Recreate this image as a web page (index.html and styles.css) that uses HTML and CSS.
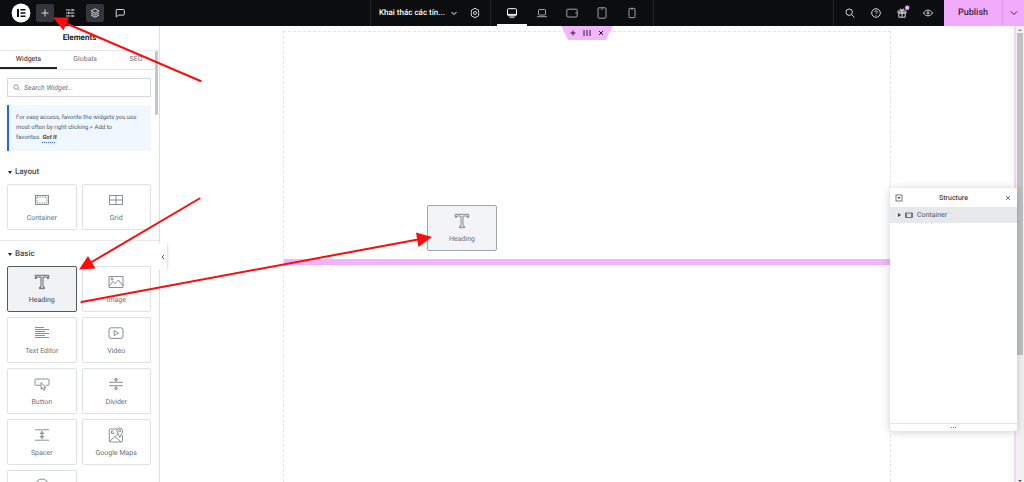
FILE: index.html
```html
<!DOCTYPE html>
<html lang="en">
<head>
<meta charset="utf-8">
<title>Elements</title>
<link rel="stylesheet" href="styles.css">
</head>
<body>
<header class="topbar">
  <div class="tools">
    <button class="logo" aria-label="Menu"><svg viewBox="0 0 20 20" width="20" height="20"><circle cx="10" cy="10" r="9.400" fill="#fff"/><path d="M6 6h2v8H6zM9.500 6h5v1.600h-5zM9.500 9.200h5v1.600h-5zM9.500 12.400h5v1.600h-5z" fill="#0c0d0e"/></svg></button>
    <button class="tool active" aria-label="Add element"><svg class="ico" viewBox="0 0 12 12"><path d="M6 2.500v7M2.500 6h7"/></svg></button>
    <button class="tool" aria-label="Site settings"><svg class="ico" viewBox="0 0 12 12"><path d="M2 3h4.500M8 3h2.500M2 6h1.500M5 6h5.500M2 9h4.500M8 9h2.500M8 1.800v2.400M4.500 4.800v2.400M8 7.800v2.400"/></svg></button>
    <button class="tool active" aria-label="Structure"><svg class="ico" viewBox="0 0 12 12"><path d="M6 1.800l4 2.200-4 2.200L2 4zM2 6l4 2.200L10 6M2 8l4 2.200L10 8"/></svg></button>
    <button class="tool" aria-label="Notes"><svg class="ico" viewBox="0 0 12 12"><path d="M3 2.500h6.500a.8.800 0 0 1 .8.800v4a.8.800 0 0 1-.8.800H4.500L2.200 10V3.300a.8.800 0 0 1 .8-.8z"/></svg></button>
  </div>
  <div class="center">
    <div class="document">
      <button class="docname">Khai thác các tín...<svg class="chev" viewBox="0 0 8 8"><path d="M1.500 3L4 5.500 6.500 3"/></svg></button>
      <button class="tool" aria-label="Page settings"><svg class="ico" viewBox="0 0 12 12"><path d="M5 1.500h2l.5 1.100 1.300-.2 1 1.600-.5 1.200.9.800-.9.900.5 1.200-1 1.500-1.300-.2L7 10.500H5l-.5-1.100-1.300.2-1-1.500.5-1.200-.9-.9.900-.8-.5-1.200 1-1.600 1.300.2z"/><circle cx="6" cy="6" r="1.500"/></svg></button>
    </div>
    <div class="devices">
      <button class="device selected" aria-label="Desktop"><svg class="ico" viewBox="0 0 12 12"><rect x="1.500" y="1.700" width="9" height="7" rx="1"/><path d="M1.500 7.400h9M3.500 10.200h5"/></svg></button>
      <button class="device" aria-label="Laptop"><svg class="ico" viewBox="0 0 12 12"><rect x="2.500" y="2.500" width="7" height="5.500" rx=".7"/><path d="M1 9.700h10"/></svg></button>
      <button class="device" aria-label="Tablet landscape"><svg class="ico" viewBox="0 0 12 12"><rect x=".8" y="2.200" width="10.400" height="7.800" rx="1"/><path d="M10 5.200v1.600"/></svg></button>
      <button class="device" aria-label="Tablet portrait"><svg class="ico" viewBox="0 0 12 12"><rect x="2" y=".8" width="8" height="10.400" rx="1"/><path d="M5.200 2.200h1.600"/></svg></button>
      <button class="device" aria-label="Mobile"><svg class="ico" viewBox="0 0 12 12"><rect x="3" y="1.300" width="6" height="9.400" rx="1"/><path d="M5.400 2.700h1.200"/></svg></button>
    </div>
  </div>
  <div class="actions">
    <div class="utilities">
      <button class="tool" aria-label="Finder"><svg class="ico" viewBox="0 0 12 12"><circle cx="5.200" cy="5.200" r="3.200"/><path d="M7.500 7.500L10.400 10.400"/></svg></button>
      <button class="tool" aria-label="Help"><svg class="ico" viewBox="0 0 12 12"><circle cx="6" cy="6" r="4.300"/><path d="M4.800 5a1.200 1.200 0 1 1 1.800 1c-.5.300-.6.500-.6.900M6 8v.7"/></svg></button>
      <button class="tool" aria-label="What's new"><svg class="ico" viewBox="0 0 12 12"><path d="M2 4h8v2H2zM2.800 6h6.400v4.200H2.800zM6 4v6M6 4C4 4 3.500 2 4.600 1.900 5.500 1.900 6 4 6 4s.5-2.100 1.400-2.100C8.500 2 8 4 6 4"/><circle class="dot" cx="11.200" cy=".8" r="2.200"/></svg></button>
      <button class="tool" aria-label="Preview"><svg class="ico" viewBox="0 0 12 12"><path d="M1.500 6C3.700 2.200 8.300 2.200 10.500 6 8.300 9.800 3.700 9.800 1.500 6z"/><circle cx="6" cy="6" r="1.100"/></svg></button>
    </div>
    <button class="publish">Publish</button>
    <button class="options" aria-label="Save options"><svg class="chev" viewBox="0 0 8 8"><path d="M1 2.500L4 5.500 7 2.500"/></svg></button>
  </div>
</header>

<main class="workspace">
  <aside class="sidebar">
    <h1 class="title">Elements</h1>
    <nav class="tabs">
      <button class="tab current">Widgets</button>
      <button class="tab">Globals</button>
      <button class="tab">SEO</button>
    </nav>
    <label class="search">
      <svg class="search-ico" viewBox="0 0 8 8"><circle cx="3.500" cy="3.500" r="2.500"/><path d="M5.300 5.300L7.300 7.300"/></svg>
      <input type="text" placeholder="Search Widget..." aria-label="Search Widget">
    </label>
    <p class="notice">For easy access, favorite the widgets you use most often by right clicking &gt; Add to <span class="keep">favorites. <a href="#">Got It</a></span></p>

    <section class="group">
      <h2 class="group-title">Layout</h2>
      <div class="cards">
        <button class="card"><svg class="wi" viewBox="0 0 16 16"><rect x="1.500" y="3.500" width="13" height="9"/><rect x="3" y="5" width="10" height="6" stroke-dasharray="1.500 1"/></svg>Container</button>
        <button class="card"><svg class="wi" viewBox="0 0 16 16"><path d="M1.500 3.500h13v9h-13zM1.500 8h13M8 3.500v9"/></svg>Grid</button>
      </div>
    </section>
    <section class="group">
      <h2 class="group-title">Basic</h2>
      <div class="cards">
        <button class="card picked"><svg class="wi" viewBox="0 0 16 16"><path d="M1.300 1.300h13.400v3.200h-1.200V3H9v10.300h1.500v1.400h-5v-1.400H7V3H2.500v1.500H1.300z"/></svg>Heading</button>
        <button class="card"><svg class="wi" viewBox="0 0 16 16"><path d="M1 2.500h14v11H1zM1 12l4-4.500 2 2.300L10.500 6l4.500 6"/><circle cx="4" cy="5" r="1.100"/></svg>Image</button>
        <button class="card"><svg class="wi" viewBox="0 0 16 16"><path d="M1 2.500h9M1 4.500h14M1 6.500h10M1 8.500h14M1 10.500h10M1 12.500h14"/></svg>Text Editor</button>
        <button class="card"><svg class="wi" viewBox="0 0 16 16"><rect x="1" y="2.800" width="14" height="10.600" rx="2.200"/><path d="M6.200 5.600v5l4.300-2.500z"/></svg>Video</button>
        <button class="card"><svg class="wi" viewBox="0 0 16 16"><path d="M6.500 9.300H2A1 1 0 0 1 1 8.300V4a1 1 0 0 1 1-1h12a1 1 0 0 1 1 1v4.300a1 1 0 0 1-1 1h-2"/><path d="M7 6.500v6.700l1.600-1.300 1 2.300 1.300-.6-1-2.200H12z"/></svg>Button</button>
        <button class="card"><svg class="wi" viewBox="0 0 16 16"><path d="M1 6.300h14M1 9.700h14M8 4.300V6M8 10v1.700M6.500 4.100L8 1.900l1.500 2.200zM6.500 11.900L8 14.100l1.500-2.200z"/></svg>Divider</button>
        <button class="card"><svg class="wi" viewBox="0 0 16 16"><path d="M1 2.800h14M1 13.200h14M8 5.500v5M6.200 6.600L8 4.300l1.800 2.300zM6.200 9.400L8 11.700l1.800-2.300z"/></svg>Spacer</button>
        <button class="card"><svg class="wi" viewBox="0 0 16 16"><path d="M9 2H2.500A1.200 1.200 0 0 0 1.300 3.200v10.600A1.200 1.200 0 0 0 2.500 15h10.800a1.200 1.200 0 0 0 1.200-1.200V8M1.500 14.500L10 6.800M7 9.700l6 5M5.500 4H3.500v2.500h2V5.300M11.800 10.500L9.300 5.300a2.900 2.900 0 1 1 5 0z"/><circle cx="11.800" cy="3.700" r="1.100"/></svg>Google Maps</button>
        <button class="card icon-only" aria-label="Icon"><svg class="wi" viewBox="0 0 16 16"><circle cx="8" cy="8" r="7"/><path d="M8 4v1.500M6.500 7H8v5M6 12h4"/></svg></button>
      </div>
    </section>
    <span class="thumb"></span>
  </aside>

  <section class="canvas">
    <button class="collapse" aria-label="Hide panel"><svg class="chev" viewBox="0 0 8 8"><path d="M5 2L3 4l2 2"/></svg></button>
    <div class="container">
      <div class="handle">
        <button aria-label="Add"><svg viewBox="0 0 8 8"><path d="M4 1.500v5M1.500 4h5"/></svg></button>
        <button aria-label="Drag"><svg viewBox="0 0 8 8"><path d="M0 2h2M3 2h2M6 2h2M0 4h2M3 4h2M6 4h2M0 6h2M3 6h2M6 6h2"/></svg></button>
        <button aria-label="Delete"><svg viewBox="0 0 8 8"><path d="M2 2l4 4M6 2L2 6"/></svg></button>
      </div>
      <div class="card dragged"><svg class="wi" viewBox="0 0 16 16"><path d="M1.300 1.300h13.400v3.200h-1.200V3H9v10.300h1.500v1.400h-5v-1.400H7V3H2.500v1.500H1.300z"/></svg>Heading</div>
      <div class="dropline"></div>
    </div>
  </section>
  <div class="scrollbar"><i class="up"></i><span class="bar"></span><i class="down"></i></div>

  <aside class="structure">
    <div class="structure-head">
      <button aria-label="Expand all"><svg viewBox="0 0 8 8"><rect x="1" y="1" width="6" height="6"/><path d="M2.300 3h3.400L4 5.200z" fill="#515962" stroke="none"/></svg></button>
      <h2>Structure</h2>
      <button aria-label="Close"><svg viewBox="0 0 8 8"><path d="M2 2l4 4M6 2L2 6"/></svg></button>
    </div>
    <button class="node"><i class="caret"></i><svg viewBox="0 0 8 8"><path d="M.5 2h7v4.500h-7zM1.600 2v4.500M6.400 2v4.500"/></svg>Container</button>
    <div class="structure-foot"><i></i><i></i><i></i></div>
  </aside>
</main>

<svg class="arrows" viewBox="0 0 1024 482" width="1024" height="482" aria-hidden="true">
  <path d="M200.500 81L64 22.500M199.500 198.500L90 263M81.500 302L418 239.500"/>
  <path class="head" d="M53 17.500L69 17.500 63.500 30.500zM79 269.500L88 256 95.500 268.500zM432 237L416 232.500 418.500 247z"/>
</svg>
</body>
</html>
```
FILE: styles.css
```css
* { box-sizing: border-box; }
body {
  margin: 0;
  height: 100vh;
  display: flex;
  flex-direction: column;
  overflow: hidden;
  background: #fff;
  color: #515962;
  font: 7px/10px Roboto, "Noto Sans", sans-serif;
  text-rendering: geometricPrecision;
}
button {
  margin: 0;
  padding: 0;
  border: 0;
  background: none;
  color: inherit;
  font: inherit;
  text-rendering: inherit;
  cursor: pointer;
}
h1, h2, p { margin: 0; }
svg { display: block; fill: none; stroke: currentColor; }

.topbar {
  flex: none;
  height: 26px;
  display: grid;
  grid-template-columns: 1fr auto 1fr;
  background: #0c0d0e;
  color: #d5d8dc;
}
.tools { display: flex; align-items: center; gap: 7px; padding-left: 11px; }
.logo svg { stroke: none; }
.logo { margin-right: -2px; }
.tool {
  width: 18px;
  height: 18px;
  display: grid;
  place-items: center;
  border-radius: 2px;
}
.tool.active { background: #33363a; }
.ico { width: 12px; height: 12px; overflow: visible; stroke-width: 1; }
.chev { width: 8px; height: 8px; }
.center { display: flex; border: solid #25282b; border-width: 0 1px; }
.document {
  display: flex;
  align-items: center;
  gap: 8px;
  padding: 0 6px 0 8px;
  border-right: 1px solid #25282b;
}
.docname { display: flex; align-items: center; gap: 5px; color: #fff; font-size: 8px; font-weight: 500; }
.devices { display: flex; padding: 0 6px; }
.device {
  width: 30px;
  display: grid;
  place-items: center;
  border: solid transparent;
  border-width: 2px 0;
  color: #9da5ae;
}
.device.selected { border-bottom-color: #fff; color: #fff; }
.actions { display: flex; justify-content: flex-end; }
.utilities {
  display: flex;
  align-items: center;
  gap: 8px;
  padding: 0 7px;
  border-left: 1px solid #25282b;
}
.dot { fill: #f0abfc; stroke: none; }
.publish, .options { background: #f0abfc; color: #3a243d; font-size: 9px; font-weight: 500; }
.publish { width: 58px; }
.options { width: 22px; display: grid; place-items: center; border-left: 1px solid #dc9ce8; }

.workspace { position: relative; flex: 1; min-height: 0; display: flex; }
.sidebar { position: relative; width: 160px; flex: none; overflow: hidden; border-right: 1px solid #f0d0f5; }
.title { padding: 7px 0; text-align: center; color: #1f2124; font-size: 8px; line-height: 10px; font-weight: 700; }
.tabs {
  display: grid;
  grid-template-columns: 57px 56px 1fr;
  height: 20px;
  border: solid #e6e8ea;
  border-width: 1px 0;
}
.tab { color: #69727d; border-bottom: 2px solid transparent; }
.tab.current { border-bottom-color: #1f2124; color: #1f2124; }
.search {
  height: 19px;
  margin: 8px 8px 0 7px;
  padding: 0 5px;
  display: flex;
  align-items: center;
  gap: 4px;
  border: 1px solid #d5d8dc;
}
.search-ico { width: 7px; height: 7px; flex: none; color: #818a96; }
.search input { flex: 1; min-width: 0; padding: 0; border: 0; outline: 0; background: none; font: inherit; text-rendering: inherit; }
.search input::placeholder { color: #69727d; font-style: italic; opacity: 1; }
.notice {
  margin: 8px 8px 0 7px;
  padding: 8px 7px;
  border-left: 2px solid #2563eb;
  background: #f0f7ff;
  color: #515962;
  font-size: 6px;
}
.keep { white-space: nowrap; }
.notice a {
  color: #3f444b;
  font-weight: 700;
  font-style: italic;
  text-decoration: underline dotted #2563eb 1px;
  text-underline-offset: 3px;
}
.group { padding: 0 8px 10px 7px; }
.notice + .group { padding-top: 16px; }
.group + .group { padding-top: 8px; border-top: 1px solid #e6e8ea; }
.group-title {
  display: flex;
  align-items: center;
  gap: 3px;
  padding-bottom: 7px;
  color: #3f444b;
  font-size: 8px;
  line-height: 10px;
  font-weight: 500;
}
.group-title::before {
  content: "";
  margin-left: 1px;
  border: solid transparent;
  border-width: 3px 2px 0;
  border-top-color: #1f2124;
}
.cards { display: grid; grid-template-columns: 1fr 1fr; gap: 5px; }
.card {
  height: 46px;
  display: flex;
  flex-direction: column;
  align-items: center;
  justify-content: center;
  gap: 5px;
  border: 1px solid #dfe2e5;
  border-radius: 2px;
  color: #69727d;
}
.card.icon-only { justify-content: flex-start; padding-top: 7px; }
.wi { width: 16px; height: 16px; stroke-width: .8; }
.card.picked { border-color: #515962; background: #f1f2f3; color: #3f444b; }
.thumb { position: absolute; top: 25px; right: 1px; width: 3px; height: 64px; background: #c4c6c8; border-radius: 1px; }

.canvas { position: relative; flex: 1; padding-top: 5px; border-right: 2px solid #f3d4f8; }
.container {
  position: relative;
  width: 71.2%;
  height: 100%;
  margin: 0 auto;
  padding-top: 227px;
  border: 1px dashed #e1e3e6;
  border-bottom: 0;
}
.dropline { height: 6px; background: #f3b2fc; }
.handle {
  position: absolute;
  top: -6px;
  left: 50%;
  width: 52px;
  height: 14px;
  margin-left: -26px;
  padding: 0 8px;
  display: flex;
  align-items: center;
  justify-content: space-between;
  background: #f3b5fc;
  color: #2b1b2e;
  clip-path: polygon(0 0, 100% 0, 86% 100%, 14% 100%);
}
.handle svg, .structure svg { width: 8px; height: 8px; }
.structure svg { stroke-width: .8; }
.dragged {
  position: absolute;
  top: 173px;
  left: 143px;
  width: 70px;
  border-color: #9da5ae;
  background: #f3f4f5;
}
.collapse {
  position: absolute;
  top: 217px;
  left: -1px;
  width: 8px;
  height: 27px;
  display: grid;
  place-items: center;
  background: #fff;
  box-shadow: 1px 0 2px #0002;
}
.scrollbar {
  width: 8px;
  display: flex;
  flex-direction: column;
  align-items: center;
  padding: 3px 0 0;
  background: #f1f1f1;
}
.scrollbar i { border: 2px solid transparent; }
.scrollbar .up { margin-bottom: 2px; border-top: 0; border-bottom-color: #85888b; }
.scrollbar .down { margin-top: auto; border-bottom: 0; border-top-color: #515962; }
.bar { width: 6px; height: 71%; background: #bfc0c1; }

.structure {
  position: absolute;
  top: 162px;
  right: 7px;
  width: 127px;
  height: 243px;
  display: flex;
  flex-direction: column;
  background: #fff;
  border-radius: 2px;
  box-shadow: 0 1px 8px #0003;
}
.structure-head {
  height: 19px;
  padding: 0 5px;
  display: flex;
  align-items: center;
  justify-content: space-between;
}
.structure-head h2 { color: #3f444b; font-size: 7px; font-weight: 500; }
.node {
  height: 16px;
  padding: 0 8px;
  display: flex;
  align-items: center;
  gap: 4px;
  background: #e6e8ea;
}
.caret { border: solid transparent; border-width: 2px 0 2px 3px; border-left-color: #3f444b; }
.structure-foot {
  height: 8px;
  margin-top: auto;
  display: flex;
  align-items: center;
  justify-content: center;
  gap: 1px;
  border-top: 1px solid #e1e3e6;
}
.structure-foot i { width: 1px; height: 1px; background: #69727d; }

.arrows { position: absolute; top: 0; left: 0; pointer-events: none; stroke: #fe0b0b; stroke-width: 2; stroke-linecap: round; }
.arrows .head { fill: #fe0b0b; stroke: none; }
```
